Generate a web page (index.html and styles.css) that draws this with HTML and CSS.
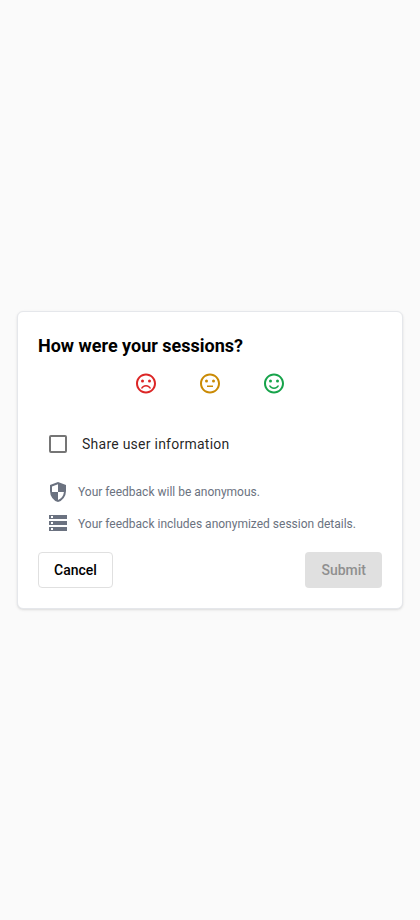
FILE: index.html
```html
<!DOCTYPE html>
<html lang="en">
<head>
<meta charset="utf-8">
<title>Session feedback</title>
<link rel="stylesheet" href="styles.css">
</head>
<body>
<main class="card">
  <h1 class="title">How were your sessions?</h1>
  <div class="ratings">
    <button class="rate bad" aria-label="Bad"><svg viewBox="0 0.5 24 24"><circle cx="15.5" cy="9.5" r="1.5"/><circle cx="8.5" cy="9.5" r="1.5"/><path d="M12 13.500c-2.330 0-4.310 1.460-5.110 3.500h1.650c.7-1.190 1.970-2 3.460-2s2.760.81 3.460 2h1.650c-.8-2.040-2.780-3.500-5.110-3.500zM11.990 2C6.470 2 2 6.480 2 12s4.470 10 9.990 10C17.520 22 22 17.520 22 12S17.520 2 11.990 2zM12 20c-4.420 0-8-3.580-8-8s3.580-8 8-8 8 3.580 8 8-3.580 8-8 8z"/></svg></button>
    <button class="rate neutral" aria-label="Neutral"><svg viewBox="0 0.5 24 24"><path d="M9 15.500h6v-1.500H9z"/><circle cx="15.5" cy="9.5" r="1.5"/><circle cx="8.5" cy="9.5" r="1.5"/><path d="M11.990 2C6.470 2 2 6.480 2 12s4.470 10 9.990 10C17.520 22 22 17.520 22 12S17.520 2 11.990 2zM12 20c-4.420 0-8-3.580-8-8s3.580-8 8-8 8 3.580 8 8-3.580 8-8 8z"/></svg></button>
    <button class="rate good" aria-label="Good"><svg viewBox="0 0.5 24 24"><circle cx="15.5" cy="9.5" r="1.5"/><circle cx="8.5" cy="9.5" r="1.5"/><path d="M12 16c-1.480 0-2.750-.81-3.450-2H6.880c.8 2.050 2.790 3.500 5.120 3.500s4.320-1.450 5.120-3.500h-1.670c-.7 1.190-1.970 2-3.450 2zM11.990 2C6.470 2 2 6.480 2 12s4.470 10 9.990 10C17.520 22 22 17.520 22 12S17.520 2 11.990 2zM12 20c-4.420 0-8-3.580-8-8s3.580-8 8-8 8 3.580 8 8-3.580 8-8 8z"/></svg></button>
  </div>
  <label class="share"><input class="check" type="checkbox"><span>Share user information</span></label>
  <ul class="notes">
    <li class="note"><svg viewBox="0 -960 960 960"><path d="M480-80q-139-35-229.500-159.500T160-516v-244l320-120 320 120v244q0 152-90.500 276.500T480-80Zm0-84q97-30 162-118.500T718-480H480v-315l-240 90v207q0 7 2 18h238v316Z"/></svg><span>Your feedback will be anonymous.</span></li>
    <li class="note"><svg viewBox="0 1 24 24"><path d="M3 20h18v-4H3v4zm2-3h2v2H5v-2zM3 4v4h18V4H3zm4 3H5V5h2v2zm-4 7h18v-4H3v4zm2-3h2v2H5v-2z"/></svg><span>Your feedback includes anonymized session details.</span></li>
  </ul>
  <div class="actions">
    <button class="btn cancel">Cancel</button>
    <button class="btn submit" disabled>Submit</button>
  </div>
</main>
</body>
</html>
```

FILE: styles.css
```css
* {
  box-sizing: border-box;
}

body {
  margin: 0;
  min-height: 100vh;
  display: flex;
  align-items: center;
  padding: 0 17px;
  background: #fafafa;
  font-family: Roboto, sans-serif;
}

.card {
  width: 100%;
  height: 298px;
  padding: 20px;
  background: #fff;
  border: 1px solid #e5e7eb;
  border-radius: 6px;
  box-shadow: 0 1px 3px rgba(0, 0, 0, 0.1), 0 1px 2px -1px rgba(0, 0, 0, 0.1);
}

.title {
  margin: 0;
  font-size: 18px;
  line-height: 28px;
  font-weight: 700;
  color: #000;
}

.ratings {
  display: flex;
  justify-content: center;
  gap: 40px;
  height: 24px;
  margin-top: 12px;
}

.rate {
  width: 24px;
  height: 24px;
  padding: 0;
  border: 0;
  background: none;
}

.rate svg,
.note svg {
  display: block;
  fill: currentColor;
}

.bad {
  color: #dc2626;
}

.neutral {
  color: #ca8a04;
}

.good {
  color: #16a34a;
}

.share {
  display: flex;
  align-items: center;
  gap: 15px;
  height: 40px;
  margin-top: 28px;
  padding-left: 11px;
  font-size: 14px;
  letter-spacing: 0.25px;
  color: rgba(0, 0, 0, 0.87);
}

.check {
  appearance: none;
  width: 18px;
  height: 18px;
  margin: 0;
  border: 2px solid #757575;
  border-radius: 2px;
}

.notes {
  list-style: none;
  margin: 12px 0 0;
  padding: 0 0 0 8px;
}

.note {
  display: flex;
  align-items: center;
  gap: 8px;
  height: 32px;
  font-size: 12px;
  color: #6b7280;
}

.note svg {
  width: 24px;
  height: 24px;
}

.actions {
  display: flex;
  justify-content: space-between;
  margin-top: 12px;
}

.btn {
  height: 36px;
  padding: 0 15px;
  border: 1px solid #e0e0e0;
  border-radius: 4px;
  background: #fff;
  color: #000;
  font: 500 14px/20px Roboto, sans-serif;
}

.submit {
  padding: 0 16px;
  border: 0;
  background: #e0e0e0;
  color: #8f8f8f;
}
```
